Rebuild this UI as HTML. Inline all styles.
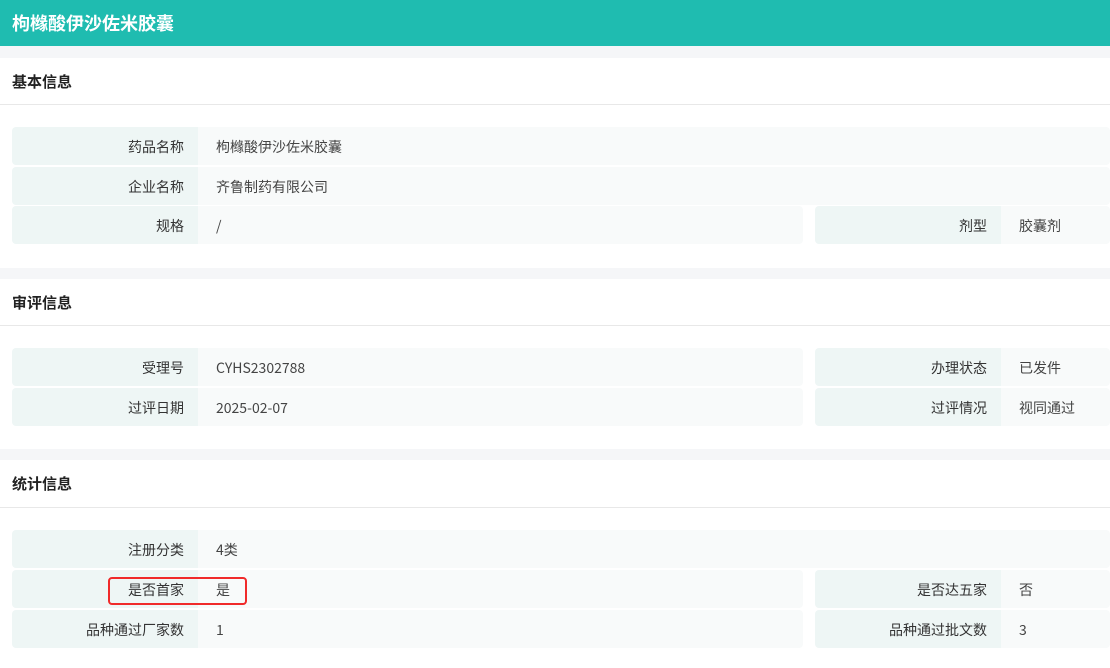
<!DOCTYPE html>
<html><head><meta charset="utf-8"><style>
*{margin:0;padding:0;box-sizing:border-box}
body{width:1110px;height:668px;overflow:hidden;background:#f5f6f8;font-family:"Noto Sans CJK SC","Liberation Sans",sans-serif;position:relative}
.hd{position:absolute;left:0;top:0;width:1110px;height:46px;background:#1fbcb0;color:#fff;font-weight:bold;font-size:18px;line-height:46px;padding-left:12px}
.card{position:absolute;left:0;width:1110px;background:#fff}
.t{position:absolute;left:12px;font-size:15px;font-weight:bold;color:#222;line-height:20px}
.ln{position:absolute;left:0;width:1110px;height:1px;background:#e8e8e8}
.r{position:absolute;height:38px;display:flex;font-size:14px;line-height:40px;border-radius:4px;overflow:hidden}
.l{width:186px;background:#eef6f5;color:#333;text-align:right;padding-right:14px}
.v{flex:1;background:#f8fafa;color:#444;padding-left:18px}
.box{position:absolute;left:108px;top:577px;width:139px;height:28px;border:2px solid #f02a2a;border-radius:4px}
</style></head><body>
<div class="hd">枸橼酸伊沙佐米胶囊</div>
<div class="card" style="top:58px;height:210px"></div>
<div class="t" style="top:72px">基本信息</div>
<div class="ln" style="top:104px"></div>
<div class="r" style="left:12px;top:127px;width:1098px"><div class="l">药品名称</div><div class="v">枸橼酸伊沙佐米胶囊</div></div>
<div class="r" style="left:12px;top:167px;width:1098px"><div class="l">企业名称</div><div class="v">齐鲁制药有限公司</div></div>
<div class="r" style="left:12px;top:206px;width:791px"><div class="l">规格</div><div class="v">/</div></div>
<div class="r" style="left:815px;top:206px;width:295px"><div class="l">剂型</div><div class="v">胶囊剂</div></div>

<div class="card" style="top:279px;height:170px"></div>
<div class="t" style="top:293px">审评信息</div>
<div class="ln" style="top:325px"></div>
<div class="r" style="left:12px;top:348px;width:791px"><div class="l">受理号</div><div class="v">CYHS2302788</div></div>
<div class="r" style="left:815px;top:348px;width:295px"><div class="l">办理状态</div><div class="v">已发件</div></div>
<div class="r" style="left:12px;top:388px;width:791px"><div class="l">过评日期</div><div class="v">2025-02-07</div></div>
<div class="r" style="left:815px;top:388px;width:295px"><div class="l">过评情况</div><div class="v">视同通过</div></div>

<div class="card" style="top:460px;height:208px"></div>
<div class="t" style="top:474px">统计信息</div>
<div class="ln" style="top:507px"></div>
<div class="r" style="left:12px;top:530px;width:1098px"><div class="l">注册分类</div><div class="v">4类</div></div>
<div class="r" style="left:12px;top:570px;width:791px"><div class="l">是否首家</div><div class="v">是</div></div>
<div class="r" style="left:815px;top:570px;width:295px"><div class="l">是否达五家</div><div class="v">否</div></div>
<div class="r" style="left:12px;top:610px;width:791px"><div class="l">品种通过厂家数</div><div class="v">1</div></div>
<div class="r" style="left:815px;top:610px;width:295px"><div class="l">品种通过批文数</div><div class="v">3</div></div>
<div class="box"></div>
</body></html>
